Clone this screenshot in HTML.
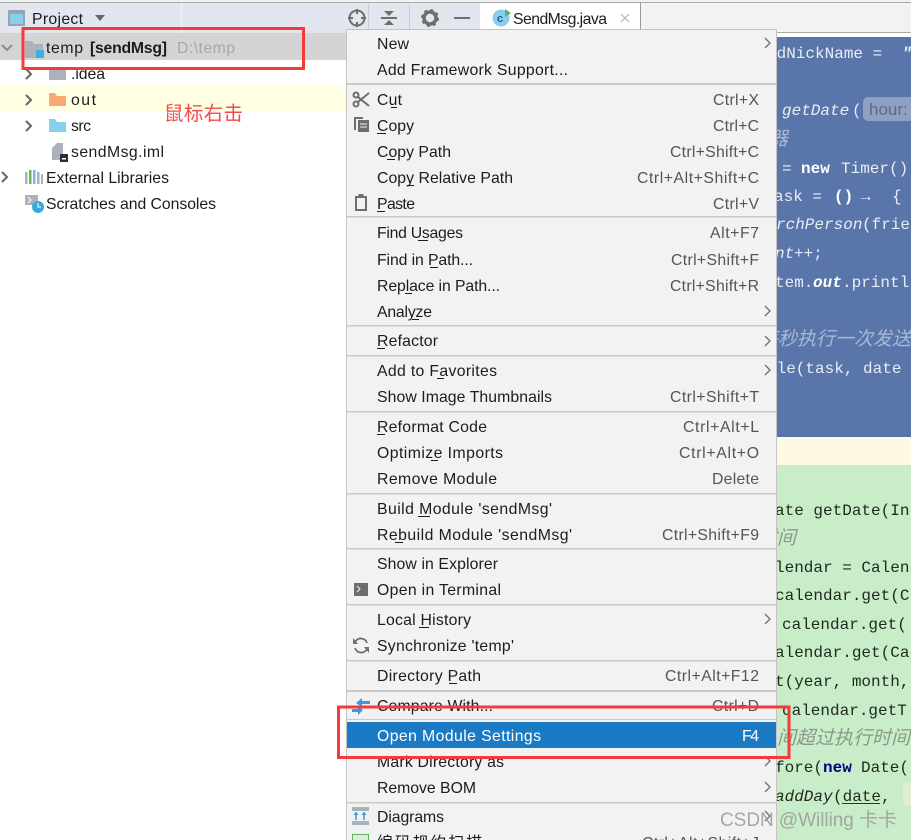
<!DOCTYPE html>
<html><head><meta charset="utf-8"><style>
html,body{margin:0;padding:0;background:#fff;width:911px;height:840px;overflow:hidden}
svg{display:block}
text{font-family:"Liberation Sans","Noto Sans CJK SC",sans-serif;font-size:15.8px;fill:#1c1c1c}
.s text{fill:#555}
.m text{font-family:"Liberation Mono","Noto Sans CJK SC",monospace;font-size:16px;fill:#e8edf5}
.g text{fill:#1f2a1f}
.i{font-style:italic}
.c{font-style:italic;fill:#a9b8d4!important}
</style></head><body>
<svg width="911" height="840" viewBox="0 0 911 840" xmlns="http://www.w3.org/2000/svg">
<defs><clipPath id="ed"><rect x="776" y="37" width="135" height="804"/></clipPath></defs>
<!-- toolbar -->
<rect width="911" height="33" fill="#f2f2f2"/>
<rect y="2" width="480" height="31" fill="#e3e6ee"/>
<rect y="2" width="911" height="1" fill="#a9a9a9"/>
<rect x="181" y="3" width="1" height="30" fill="#f2f3f7"/>
<rect x="368" y="4" width="1" height="26" fill="#c9ccd4"/>
<rect x="409" y="4" width="1" height="26" fill="#c9ccd4"/>
<rect x="480" y="3" width="160" height="28" fill="#fff"/>
<rect x="640" y="3" width="1" height="28" fill="#999"/>
<rect x="8" y="10" width="17" height="16" fill="#9aa3ad"/><rect x="10" y="14" width="13" height="10" fill="#87d0ec"/>
<text x="32" y="24" textLength="51">Project</text>
<path d="M95 15h10l-5 6z" fill="#666"/>
<g fill="none" stroke="#6e6e6e" stroke-width="2"><circle cx="357" cy="18" r="7.5"/><path d="M357 9v5M357 22v5M348 18h5M361 18h5"/></g>
<path d="M381 18h16" stroke="#6e6e6e" stroke-width="2"/><path d="M384 11h10l-5 5zM384 25h10l-5-5z" fill="#6e6e6e"/>
<circle cx="430" cy="18" r="6" fill="none" stroke="#6e6e6e" stroke-width="3.5"/><circle cx="430" cy="18" r="8" fill="none" stroke="#6e6e6e" stroke-width="2" stroke-dasharray="3 3.3"/>
<rect x="454" y="17" width="16" height="2" fill="#6e6e6e"/>
<circle cx="501" cy="18" r="8.5" fill="#87d0ec"/><text x="497" y="22" style="font-size:11px;fill:#2d5a78;font-weight:bold">c</text><path d="M505 9l6 4-6 4z" fill="#5fb35f"/>
<text x="513" y="24" textLength="94">SendMsg.java</text>
<path d="M621 14l8 8M629 14l-8 8" stroke="#b5b5b5" stroke-width="1.2"/>
<!-- tree -->
<rect y="33" width="346" height="27" fill="#d4d4d4"/>
<rect y="86" width="346" height="26" fill="#ffffe4"/>
<path d="M2 45l5 5 5-5" fill="none" stroke="#8c8c8c" stroke-width="2"/>
<path d="M25 41h7l2 3h9v14H25z" fill="#aab3bb"/><rect x="36" y="50" width="8" height="8" fill="#3cb1e6"/>
<text x="46" y="53" textLength="37">temp</text>
<text x="90" y="53" textLength="77" style="font-weight:bold">[sendMsg]</text>
<text x="177" y="53" textLength="58" style="fill:#a8a8a8">D:\temp</text>
<g fill="none" stroke="#666" stroke-width="2"><path d="M26 69l5 5-5 5M26 95l5 5-5 5M26 121l5 5-5 5M2 172l5 5-5 5"/></g>
<path d="M49 67h6l2 3h9v10H49z" fill="#aab3bb"/><path d="M49 93h6l2 3h9v10H49z" fill="#f9a873"/><path d="M49 119h6l2 3h9v10H49z" fill="#87d0ec"/>
<text x="71" y="79" textLength="34">.idea</text>
<text x="71" y="105" textLength="25">out</text>
<text x="71" y="131" textLength="20">src</text>
<path d="M52 148l5-5h6v17H52z" fill="#aab3bb"/><rect x="60" y="154" width="8" height="8" fill="#2f2f2f"/><rect x="62" y="158" width="4" height="1.500" fill="#fff"/>
<text x="71" y="157" textLength="93">sendMsg.iml</text>
<text x="46" y="183" textLength="123">External Libraries</text>
<rect x="25" y="172" width="2.500" height="12" fill="#aab3bb"/><rect x="29" y="170" width="2.500" height="14" fill="#6fb64f"/><rect x="33" y="170" width="2.500" height="14" fill="#87b4d9"/><rect x="37" y="172" width="2.500" height="12" fill="#aab3bb"/><rect x="41" y="174" width="2" height="10" fill="#aab3bb"/>
<text x="46" y="209" textLength="170">Scratches and Consoles</text>
<rect x="25" y="195" width="13" height="10" fill="#aab3bb"/><path d="M28 197l3 3-3 3" stroke="#fff" fill="none"/><circle cx="38" cy="207" r="6" fill="#3aa6dc"/><path d="M38 203v4h3" stroke="#fff" fill="none"/>
<text x="164" y="120" textLength="79" style="font-size:19.500px;fill:#f34a4a">鼠标右击</text>
<!-- editor -->
<rect x="776" y="32" width="135" height="1" fill="#a9a9a9"/>
<rect x="776" y="33" width="135" height="4" fill="#fff"/>
<rect x="776" y="37" width="135" height="400" fill="#5a75aa"/>
<rect x="776" y="437" width="135" height="28" fill="#fff8e3"/>
<rect x="776" y="465" width="135" height="375" fill="#c9ecc9"/>
<g class="m" clip-path="url(#ed)">
<text x="767" y="58">ndNickName =</text><text x="902" y="58" class="i" style="font-weight:bold">"</text>
<text x="782" y="115" class="i">getDate</text><text x="852" y="115">(</text>
<rect x="863" y="97" width="60" height="24" rx="5" fill="#8ea0c4"/>
<text x="869" y="115" style="font-family:'Liberation Sans';font-size:17px;fill:#5f6a80">hour:</text>
<text x="769" y="145" class="c" style="font-size:19px">器</text>
<text x="782" y="173">=</text><text x="801" y="173" style="font-weight:bold;fill:#fff">new</text><text x="841" y="173">Timer()</text>
<text x="774" y="201">ask =</text><text x="834" y="201" style="font-weight:bold;fill:#fff">()</text><text x="861" y="201">→</text><text x="892" y="201">{</text>
<text x="776" y="229" class="i">rchPerson</text><text x="862" y="229">(frie</text>
<text x="775" y="258" class="i">nt</text><text x="794" y="258">++;</text>
<text x="775" y="287">tem.</text><text x="813" y="287" class="i" style="font-weight:bold;fill:#fff">out</text><text x="842" y="287">.printl</text>
<text x="759" y="345" class="c" style="font-size:19px">每秒执行一次发送</text>
<text x="767" y="373">ule(task, date</text>
</g>
<g class="m g" clip-path="url(#ed)">
<text x="775" y="515">ate getDate(In</text>
<text x="758" y="544" class="i" style="font-size:19px;fill:#8a9a8a">时间</text>
<text x="775" y="572">lendar = Calen</text>
<text x="775" y="600">calendar.get(C</text>
<text x="782" y="629">calendar.get(</text>
<text x="775" y="657">alendar.get(Ca</text>
<text x="775" y="686">t(year, month,</text>
<text x="782" y="715">calendar.getT</text>
<text x="777" y="744" class="i" style="font-size:19px;fill:#8a9a8a">间超过执行时间</text>
<text x="775" y="772">fore(</text><text x="823" y="772" style="font-weight:bold;fill:#000080">new</text><text x="861" y="772">Date(</text>
<text x="775" y="801" class="i">addDay</text><text x="833" y="801">(date,</text><rect x="842" y="803" width="38" height="1" fill="#333"/>
<rect x="903" y="782" width="12" height="23" rx="4" fill="#e4ecd4"/>
</g>
<!-- menu -->
<rect x="346.500" y="29.500" width="430" height="820" fill="#f2f2f2" stroke="#c4c4c4"/>
<g fill="#c9c9c9">
<rect x="347" y="83" width="429" height="2"/><rect x="347" y="216" width="429" height="1.500"/><rect x="347" y="325" width="429" height="1.500"/><rect x="347" y="355" width="429" height="1.500"/><rect x="347" y="411" width="429" height="1.500"/><rect x="347" y="493" width="429" height="1.500"/><rect x="347" y="548" width="429" height="1.500"/><rect x="347" y="604" width="429" height="1.500"/><rect x="347" y="660" width="429" height="1.500"/><rect x="347" y="690" width="429" height="2"/><rect x="347" y="719" width="429" height="1"/><rect x="347" y="802" width="429" height="1.500"/>
</g>
<rect x="347" y="722" width="429" height="26" fill="#1a7ac3"/>
<g>
<text x="377" y="49" textLength="32">New</text>
<text x="377" y="75" textLength="191">Add Framework Support...</text>
<text x="377" y="105" textLength="25">Cut</text>
<text x="377" y="131" textLength="37">Copy</text>
<text x="377" y="157" textLength="74">Copy Path</text>
<text x="377" y="183" textLength="136">Copy Relative Path</text>
<text x="377" y="209" textLength="38">Paste</text>
<text x="377" y="238" textLength="86">Find Usages</text>
<text x="377" y="265" textLength="96">Find in Path...</text>
<text x="377" y="291" textLength="123">Replace in Path...</text>
<text x="377" y="317" textLength="55">Analyze</text>
<text x="377" y="346" textLength="61">Refactor</text>
<text x="377" y="376" textLength="120">Add to Favorites</text>
<text x="377" y="402" textLength="175">Show Image Thumbnails</text>
<text x="377" y="432" textLength="110">Reformat Code</text>
<text x="377" y="458" textLength="126">Optimize Imports</text>
<text x="377" y="484" textLength="120">Remove Module</text>
<text x="377" y="514" textLength="175">Build Module 'sendMsg'</text>
<text x="377" y="540" textLength="195">Rebuild Module 'sendMsg'</text>
<text x="377" y="569" textLength="121">Show in Explorer</text>
<text x="377" y="595" textLength="124">Open in Terminal</text>
<text x="377" y="625" textLength="94">Local History</text>
<text x="377" y="651" textLength="137">Synchronize 'temp'</text>
<text x="377" y="681" textLength="104">Directory Path</text>
<text x="377" y="711" textLength="116">Compare With...</text>
<text x="377" y="741" textLength="164" style="fill:#fff">Open Module Settings</text>
<text x="377" y="767" textLength="127">Mark Directory as</text>
<text x="377" y="793" textLength="99">Remove BOM</text>
<text x="377" y="822" textLength="67">Diagrams</text>
<text x="377" y="848" textLength="105">编码规约扫描</text>
</g>
<g fill="#1c1c1c">
<rect x="391" y="107" width="6" height="1"/><rect x="377" y="133" width="9" height="1"/><rect x="387" y="159" width="8" height="1"/><rect x="407" y="185" width="7" height="1"/><rect x="377" y="211" width="8" height="1"/><rect x="418" y="240" width="10" height="1"/><rect x="430" y="267" width="8" height="1"/><rect x="405" y="293" width="7" height="1"/><rect x="412" y="319" width="7" height="1"/><rect x="377" y="348" width="8" height="1"/><rect x="437" y="378" width="7" height="1"/><rect x="377" y="434" width="8" height="1"/><rect x="431" y="460" width="7" height="1"/><rect x="418" y="516" width="12" height="1"/><rect x="395" y="542" width="8" height="1"/><rect x="419" y="627" width="10" height="1"/><rect x="449" y="683" width="8" height="1"/>
</g>
<g class="s">
<text x="713" y="105" textLength="46">Ctrl+X</text>
<text x="713" y="131" textLength="46">Ctrl+C</text>
<text x="670" y="157" textLength="89">Ctrl+Shift+C</text>
<text x="637" y="183" textLength="122">Ctrl+Alt+Shift+C</text>
<text x="713" y="209" textLength="46">Ctrl+V</text>
<text x="710" y="238" textLength="49">Alt+F7</text>
<text x="671" y="265" textLength="88">Ctrl+Shift+F</text>
<text x="670" y="291" textLength="89">Ctrl+Shift+R</text>
<text x="670" y="402" textLength="89">Ctrl+Shift+T</text>
<text x="683" y="432" textLength="76">Ctrl+Alt+L</text>
<text x="679" y="458" textLength="80">Ctrl+Alt+O</text>
<text x="712" y="484" textLength="47">Delete</text>
<text x="662" y="540" textLength="97">Ctrl+Shift+F9</text>
<text x="665" y="681" textLength="94">Ctrl+Alt+F12</text>
<text x="712" y="711" textLength="47">Ctrl+D</text>
<text x="742" y="741" textLength="17" style="fill:#fff">F4</text>
<text x="642" y="848" textLength="117">Ctrl+Alt+Shift+J</text>
</g>
<g fill="none" stroke="#6e6e6e" stroke-width="1.300">
<path d="M765 38l5 5-5 5M765 306l5 5-5 5M765 336l5 5-5 5M765 365l5 5-5 5M765 614l5 5-5 5M765 756l5 5-5 5M765 782l5 5-5 5M765 811l5 5-5 5"/>
</g>
<!-- menu icons -->
<g fill="none" stroke="#6e6e6e" stroke-width="2"><circle cx="356" cy="95" r="2.500"/><circle cx="356" cy="104" r="2.500"/><path d="M358 97l11 9M358 102l11-9"/></g>
<path d="M354 117h9v2h-7v11h-2z" fill="#6e6e6e"/><rect x="358" y="120" width="11" height="12" fill="#6e6e6e"/><path d="M360 124h7M360 127h7" stroke="#f2f2f2"/>
<rect x="356" y="197" width="10" height="13" fill="none" stroke="#6e6e6e" stroke-width="2"/><rect x="358.500" y="194" width="5" height="4" fill="#6e6e6e"/>
<rect x="354" y="583" width="14" height="13" fill="#6e6e6e"/><path d="M357 586l3 3-3 3" stroke="#f2f2f2" fill="none"/>
<path d="M367 643a6.500 6.500 0 0 0-12-1M355 648a6.500 6.500 0 0 0 12 1" fill="none" stroke="#6e6e6e" stroke-width="1.800"/><path d="M353 638v6h5zM369 653v-6h-5z" fill="#6e6e6e"/>
<path d="M362 698l-6 5 6 4v-3h8v-3h-8zM358 706l5 4-5 5v-3h-6v-3h6z" fill="#3b9ad9"/>
<rect x="352" y="807" width="17" height="4" fill="#aab3bb"/><rect x="352" y="821" width="17" height="4" fill="#aab3bb"/><path d="M356 812v8M364 812v8" stroke="#3b9ad9" stroke-width="1.500"/><path d="M353.500 815l2.500-3 2.500 3zM361.500 815l2.500-3 2.500 3z" fill="#3b9ad9"/>
<rect x="352.500" y="834.500" width="16" height="12" fill="#d8efd8" stroke="#5fb35f"/>
<!-- red annotations -->
<rect x="23" y="28.500" width="280.500" height="40" fill="none" stroke="#f43a3a" stroke-width="3"/>
<rect x="338.500" y="707" width="450.500" height="50.500" fill="none" stroke="#f43a3a" stroke-width="3"/>
<!-- watermark -->
<text x="720" y="826" textLength="177" style="font-size:19px;fill:#9a9a9a;fill-opacity:.85">CSDN @Willing 卡卡</text>
</svg>
</body></html>
